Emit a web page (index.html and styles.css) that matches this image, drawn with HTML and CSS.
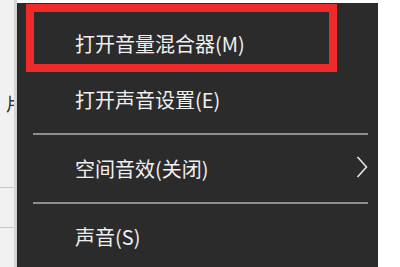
FILE: index.html
```html
<!DOCTYPE html>
<html lang="zh-CN">
<head>
<meta charset="utf-8">
<link rel="stylesheet" href="styles.css">
</head>
<body>
<div class="screen">
  <div class="side">
    <div class="side-glyph">片</div>
    <div class="side-line l1"></div>
    <div class="side-line l2"></div>
  </div>
  <div class="menu">
    <div class="item selected">打开音量混合器(M)</div>
    <div class="item row2">打开声音设置(E)</div>
    <div class="sep sep1"></div>
    <div class="item row3">
      <span>空间音效(关闭)</span>
      <svg class="chev" width="12" height="22" viewBox="0 0 12 22"><polyline points="1.5,1 10.5,11 1.5,21" fill="none" stroke="#e6e6e6" stroke-width="1.6"/></svg>
    </div>
    <div class="sep"></div>
    <div class="item row4">声音(S)</div>
  </div>
  <div class="rest"></div>
</div>
</body>
</html>
```

FILE: styles.css
```css
html, body {
  margin: 0;
  padding: 0;
  background: #ffffff;
}
.screen {
  display: flex;
  width: 400px;
  height: 267px;
  overflow: hidden;
  font-family: "Noto Sans CJK SC", "Microsoft YaHei", sans-serif;
}
.side {
  width: 14px;
  height: 267px;
  background: #f1f1f1;
  border-right: 3px solid #d6d6d6;
  position: relative;
  overflow: hidden;
}
.side-glyph {
  position: absolute;
  left: 6px;
  top: 92px;
  font-size: 18px;
  line-height: 22px;
  color: #333;
}
.side-line {
  position: absolute;
  left: 0;
  width: 14px;
  height: 1px;
  background: #c8c8c8;
}
.side-line.l1 { top: 187px; }
.side-line.l2 { top: 227px; }
.menu {
  width: 361px;
  margin-top: 3px;
  height: 264px;
  background: #2b2b2b;
  color: #f0f0f0;
  font-size: 20px;
  line-height: 24px;
  box-sizing: border-box;
  border-left: 1px solid #222;
}
.item {
  display: flex;
  align-items: center;
  padding-left: 57px;
  box-sizing: border-box;
}
.item.selected {
  margin: 1px 0 0 8px;
  width: 311px;
  height: 68px;
  border: 8px solid #ee2a2a;
  padding-left: 41px;
  padding-top: 12px;
}
.row2 { height: 56px; }
.row3 {
  height: 67px;
  justify-content: space-between;
  padding-right: 10px;
}
.chev { margin-top: -3px; }
.row4 { height: 66px; }
.sep {
  height: 2px;
  margin: 0 10px 0 15px;
  background: #8e8e8e;
}
.sep1 { margin-top: 5px; }
.rest {
  flex: 1;
  background: #ffffff;
}
```
